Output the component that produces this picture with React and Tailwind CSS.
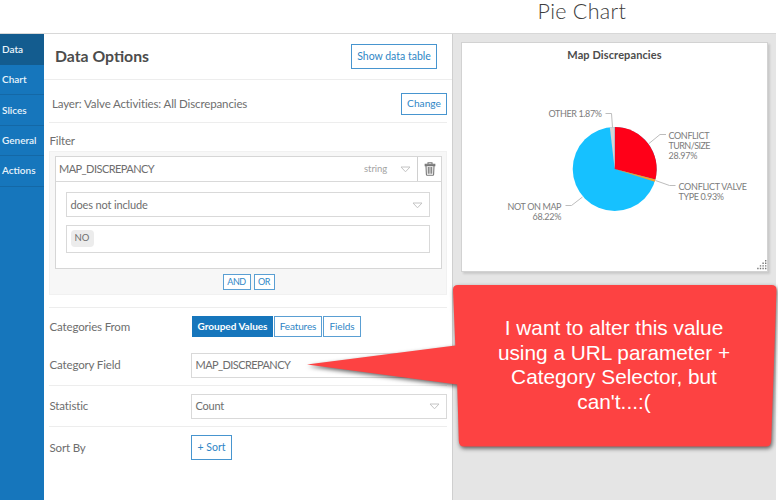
import { clsx } from 'clsx';

const tabs = ['Data', 'Chart', 'Slices', 'General', 'Actions'];

const Caret = () => (
  <svg width="11" height="7" viewBox="0 0 11 7" fill="none" stroke="#c4c4c4" strokeWidth="1">
    <path d="M1 1h9L5.5 5.8z" />
  </svg>
);

const TrashIcon = () => (
  <svg width="12" height="14" viewBox="0 0 12 14" fill="none" stroke="#777777" strokeWidth="1.1">
    <path d="M4 2V.8h4V2" />
    <path d="M1.2 3.6V2.2h9.6v1.4z" fill="#a0a0a0" />
    <path d="M2 4l.4 8.4q0 .8.8.8h5.6q.8 0 .8-.8L10 4" />
    <path d="M4.3 5v6.7M6 5v6.7M7.7 5v6.7" />
  </svg>
);

const Select = ({ value, className }) => (
  <div className={clsx('flex items-center justify-between border border-[#d9d9d9] bg-white pl-[3.5px] pr-1.5 pt-px', className)}>
    <span>{value}</span>
    <Caret />
  </div>
);

const Row = ({ label, className, children }) => (
  <div className={clsx('flex items-center', className)}>
    <span className="w-[142px] shrink-0 pl-[0.5px] text-[11.5px] tracking-[-0.15px]">{label}</span>
    {children}
  </div>
);

const Sidebar = () => (
  <nav className="flex w-11 shrink-0 flex-col bg-[#1676bc] text-[10px] font-semibold text-[#e8f3fb]">
    {tabs.map((tab, i) => (
      <div
        key={tab}
        className={clsx(
          'flex items-center border-b pl-0.5',
          i === 0 ? 'h-[31px] border-[#135c8f] bg-[#135c8f]' : 'h-[30.4px] border-[#1468a6]'
        )}
      >
        {tab}
      </div>
    ))}
  </nav>
);

const FilterBox = () => (
  <div className="mt-1 h-36 border border-[#f1f1f1] bg-[#f7f7f7] pl-[5px] pr-1 pt-1">
    <div className="h-[113px] border border-[#d6d6d6] bg-white">
      <div className="flex h-[25px] border-b border-[#d9d9d9]">
        <div className="flex flex-1 items-center pl-[3px] pr-1.5">
          <span className="flex-1 text-[11px] tracking-[-0.55px]">MAP_DISCREPANCY</span>
          <span className="mr-[13px] text-[9.5px] tracking-[-0.1px] text-[#a3a3a3]">string</span>
          <Caret />
        </div>
        <div className="flex w-6 items-center justify-center border-l border-[#d0d0d0]">
          <TrashIcon />
        </div>
      </div>
      <div className="pl-2.5 pr-[11px] pt-2.5">
        <Select value="does not include" className="h-[25px] text-[11px] tracking-[-0.15px]" />
        <div className="mt-2 flex h-7 items-start border border-[#d9d9d9] p-1 pl-[3.5px]">
          <span className="flex h-[17px] w-[23px] items-center justify-center rounded-sm bg-[#ececec] text-[9.5px]">NO</span>
        </div>
      </div>
    </div>
    <div className="mt-[5px] flex justify-center gap-[3px] text-[9px] tracking-[-0.4px] text-[#2f86c6]">
      <span className="flex h-4 w-7 items-center justify-center border border-[#5a9fd3] bg-white">AND</span>
      <span className="flex h-4 w-[21px] items-center justify-center border border-[#5a9fd3] bg-white">OR</span>
    </div>
  </div>
);

const OptionsPanel = () => (
  <section className="w-[409px] shrink-0 border-r border-[#cfcfcf] bg-white text-[#6e6e6e]">
    <div className="flex h-[46px] items-center justify-between border-b border-[#ededed] pl-[11px] pr-[15px]">
      <h2 className="-mt-0.5 text-[15.8px] font-bold text-[#4c4c4c]">Data Options</h2>
      <button className="h-[25px] w-[86px] border border-[#4795cf] pt-px text-[10.5px] text-[#2f86c6]">Show data table</button>
    </div>
    <div className="mx-[5px]">
      <div className="flex h-[43px] items-center justify-between border-b border-[#ededed] pl-[3px] pt-1.5">
        <span className="text-[11.5px] tracking-[-0.13px]">Layer: Valve Activities: All Discrepancies</span>
        <button className="h-[22px] w-[46px] border border-[#4795cf] text-[10.2px] text-[#2f86c6]">Change</button>
      </div>
      <div className="ml-[0.5px] mt-2.5 h-[14px] text-[11.5px] leading-[15px] tracking-[-0.15px]">Filter</div>
      <FilterBox />
      <div className="mt-3 border-t border-[#ededed]">
        <Row label="Categories From" className="h-[37px]">
          <div className="ml-px flex h-[21px] gap-px text-[10px] text-[#2f86c6]">
            <span className="flex w-[81px] items-center justify-center bg-[#1676bc] font-bold text-white">Grouped Values</span>
            <span className="flex w-12 items-center justify-center border border-[#5a9fd3] tracking-[-0.15px]">Features</span>
            <span className="flex w-[38px] items-center justify-center border border-[#5a9fd3] tracking-[-0.1px]">Fields</span>
          </div>
        </Row>
        <Row label="Category Field" className="h-[41px] border-b border-[#ededed]">
          <Select value="MAP_DISCREPANCY" className="h-[25px] flex-1 text-[11px] tracking-[-0.58px]" />
        </Row>
        <Row label="Statistic" className="h-[41px] border-b border-[#ededed]">
          <Select value="Count" className="h-[25px] flex-1 text-[11px] tracking-[-0.2px]" />
        </Row>
        <Row label="Sort By" className="h-[41px]">
          <button className="h-[25px] w-[41px] border border-[#4795cf] text-[10.5px] text-[#2f86c6]">+ Sort</button>
        </Row>
      </div>
    </div>
  </section>
);

const PieChart = () => (
  <svg width="305" height="228" viewBox="462 43 305 228" className="block font-[Lato,sans-serif]">
    <circle cx="614.7" cy="169" r="42" fill="#16c1ff" />
    <path d="M614.7 169V127A42 42 0 0 1 655.4 179.4z" fill="#ff0018" />
    <path d="M614.7 169L655.4 179.4A42 42 0 0 1 654.8 181.7z" fill="#f5a02a" />
    <path d="M614.7 169L609.8 127.3A42 42 0 0 1 614.7 127z" fill="#d5d5d5" />
    <g fill="none" stroke="#bdbdbd" strokeWidth="1">
      <path d="M605.5 113.5h6l1 14" />
      <path d="M649 143.5l11-9h6" />
      <path d="M655.5 180.5l14 5h6" />
      <path d="M582.5 197l-11 8.5h-6" />
    </g>
    <g fill="#7c7c7c" fontSize="9">
      <text x="548.5" y="117" textLength="53.5">OTHER 1.87%</text>
      <text x="668.5" y="138.5" textLength="41">CONFLICT</text>
      <text x="668.5" y="148.5" textLength="42">TURN/SIZE</text>
      <text x="668.5" y="159" textLength="29">28.97%</text>
      <text x="678.5" y="190" textLength="68.5">CONFLICT VALVE</text>
      <text x="678.5" y="200" textLength="45.5">TYPE 0.93%</text>
      <text x="507.5" y="209.5" textLength="54">NOT ON MAP</text>
      <text x="532.5" y="219.5" textLength="29">68.22%</text>
    </g>
    <g fill="#777777">
      <path d="M765 260h1.4v1.4H765zM765 262.6h1.4v1.4H765zM762.4 262.6h1.4v1.4h-1.4zM765 265.2h1.4v1.4H765zM762.4 265.2h1.4v1.4h-1.4zM759.8 265.2h1.4v1.4h-1.4zM765 267.8h1.4v1.4H765zM762.4 267.8h1.4v1.4h-1.4zM759.8 267.8h1.4v1.4h-1.4zM757.2 267.8h1.4v1.4h-1.4z" />
    </g>
  </svg>
);

const Callout = () => (
  <div className="absolute left-[300px] top-[280px] h-[180px] w-[478px]">
    <svg width="478" height="180" viewBox="300 280 478 180" className="absolute inset-0 drop-shadow-[1px_2px_2px_rgba(0,0,0,0.6)]">
      <path
        d="M458 285H771.5Q776.7 285 776.5 290L771.2 441Q771 446.5 766 446.5H464Q459 446.5 458.8 441L457.2 384.5L307 364.5L455.3 345.5L453 290Q452.8 285 458 285z"
        fill="#fd4242"
      />
    </svg>
    <p className="relative ml-[154px] mt-9 w-[320px] text-center font-['Liberation_Sans',Arial,sans-serif] text-[20.8px] leading-[24.6px] text-white">
      I want to alter this value
      <br />
      using a URL parameter +
      <br />
      Category Selector, but
      <br />
      can't...:(
    </p>
  </div>
);

export default function App() {
  return (
    <div className="relative flex h-[500px] w-[778px] flex-col overflow-hidden bg-white font-[Lato,sans-serif]">
      <header className="h-[34px] w-[776px] shrink-0 border-b border-[#d8d8d8] pl-[537.5px]">
        <h1 className="text-[21.5px] leading-[22px] tracking-[0.3px] font-light text-[#3c3c3c]">Pie Chart</h1>
      </header>
      <div className="flex w-[776px] flex-1">
        <Sidebar />
        <OptionsPanel />
        <main className="flex-1 bg-[#e5e5e5] pl-2 pt-2">
          <div className="relative h-[230px] w-[307px] border border-[#d2d2d2] bg-white shadow-[2px_2px_2px_rgba(0,0,0,0.12)]">
            <h3 className="absolute inset-x-0 top-1 text-center text-[11px] tracking-[0.1px] font-bold text-[#4c4c4c]">Map Discrepancies</h3>
            <PieChart />
          </div>
        </main>
      </div>
      <Callout />
    </div>
  );
}
